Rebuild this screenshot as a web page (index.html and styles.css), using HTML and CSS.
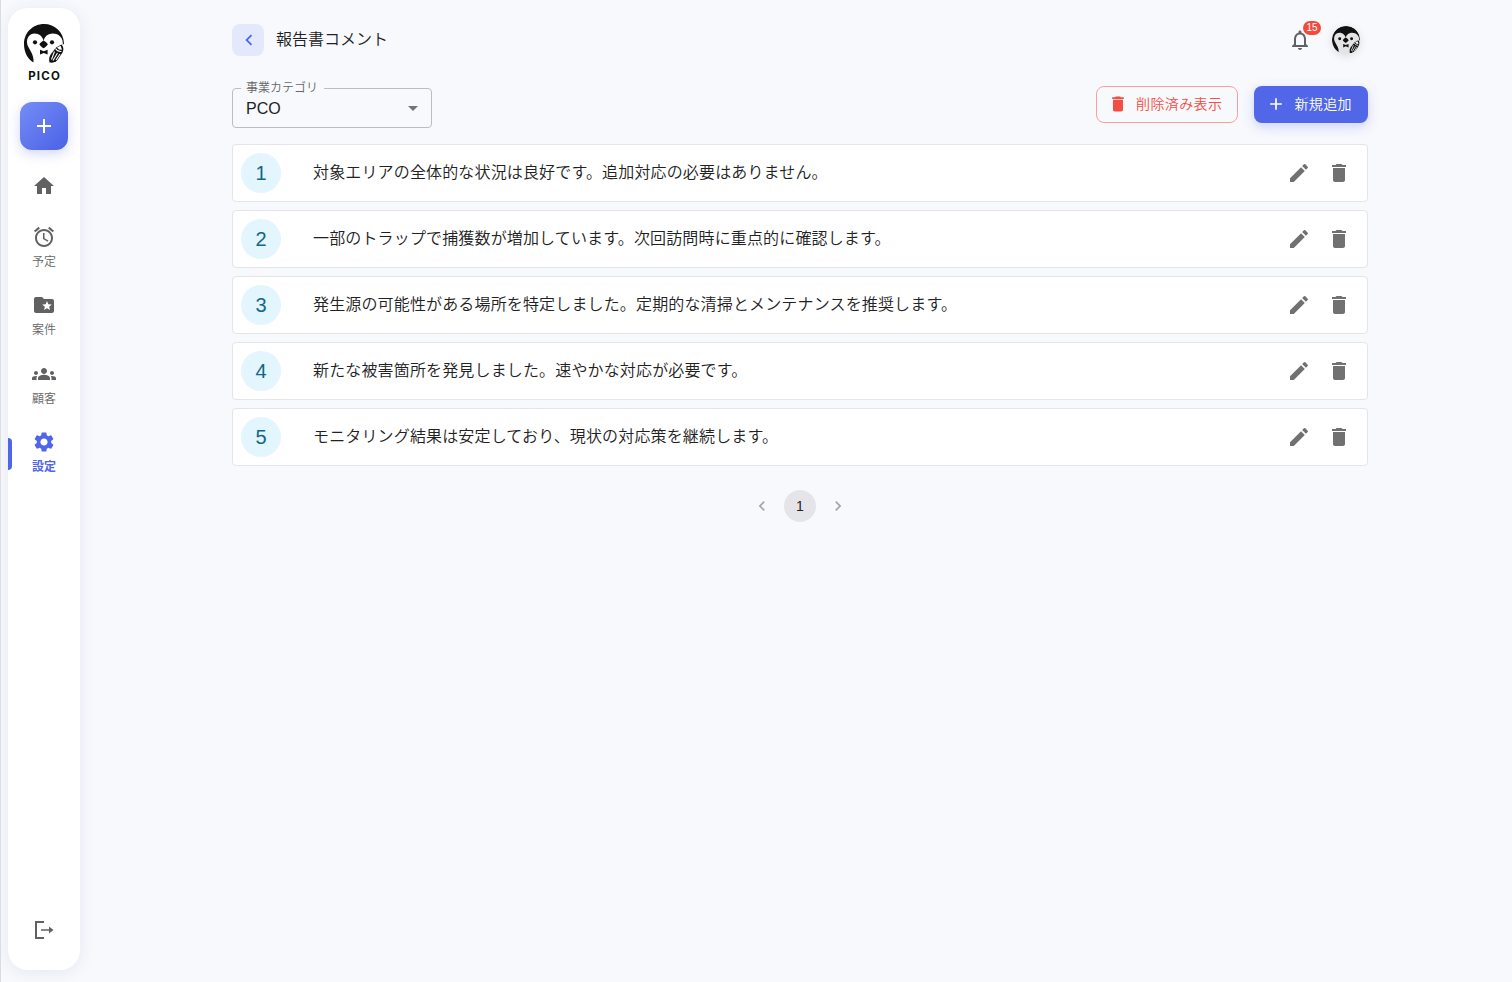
FILE: index.html
```html
<!DOCTYPE html>
<html lang="ja">
<head>
    <meta charset="UTF-8">
    <title>報告書コメント</title>
    <link rel="stylesheet" href="styles.css">
</head>
<body>
    <!-- shared icons -->
    <svg class="sprite" aria-hidden="true">
        <symbol id="penguin" viewBox="0 0 40 40">
            <path fill="#111" d="M9.500 38.500C3.500 35 0 28 0 20 0 8.500 9 0 20 0s19.500 8 20 19.500l-1.200 1.500C39.500 14 35 9.500 28.800 9.500c-4.800 0-8.400 3-9.200 7.500-.8-4.500-4.400-7.500-9-7.500C5.500 9.500 2.200 14 3.200 20c.8 4.500 7.300 10 6.300 18.500z"/>
            <circle cx="11" cy="18.300" r="2.100" fill="#111"/>
            <circle cx="28" cy="18.300" r="2.100" fill="#111"/>
            <path fill="#111" d="M19.600 16.500c1.500.7 3 2 4.300 3.700-1.200 1.700-2.500 3-4.300 4.100-1.800-1.100-3.100-2.400-4.300-4.100 1.300-1.700 2.800-3 4.300-3.700zM16 25.800l3.800 1.500 3.800-1.500v4.800l-3.800-1.500-3.800 1.500z"/>
            <path fill="#111" d="M37.500 20.500c2 2 2.500 5 1 8l-5 7.500c-2 2.200-5 3-8 2.500-.8-3-.3-6 1.500-8.500l5-6.500z"/>
            <path fill="none" stroke="#fff" stroke-width="1.100" d="M31.500 24.500c1 1.800 3.500 3.200 6 3M30.500 27.500l-3 8M33.500 29l-4.500 7.500M36 30l-4 6"/>
            <path fill="#fff" d="M33 23.500l3.500-1.800 1.500 4-3-.2z"/>
        </symbol>
        <symbol id="edit" viewBox="0 0 24 24">
            <path d="M3 17.250V21h3.750L17.810 9.940l-3.750-3.750L3 17.250zM20.710 7.040c.39-.39.39-1.020 0-1.410l-2.340-2.340a.9959.9959 0 0 0-1.410 0l-1.830 1.830 3.750 3.750 1.830-1.830z"/>
        </symbol>
        <symbol id="delete" viewBox="0 0 24 24">
            <path d="M6 19c0 1.100.9 2 2 2h8c1.100 0 2-.9 2-2V7H6v12zM19 4h-3.500l-1-1h-5l-1 1H5v2h14V4z"/>
        </symbol>
        <symbol id="add" viewBox="0 0 24 24">
            <path d="M19 13h-6v6h-2v-6H5v-2h6V5h2v6h6v2z"/>
        </symbol>
        <symbol id="prev" viewBox="0 0 24 24">
            <path d="M15.410 7.410 14 6l-6 6 6 6 1.410-1.410L10.830 12z"/>
        </symbol>
        <symbol id="next" viewBox="0 0 24 24">
            <path d="M10 6 8.590 7.410 13.170 12l-4.580 4.590L10 18l6-6z"/>
        </symbol>
    </svg>

    <aside class="sidebar">
        <svg class="logo"><use href="#penguin"/></svg>
        <div class="brand">PICO</div>
        <button class="create"><svg class="icon"><use href="#add"/></svg></button>
        <nav>
            <a class="nav-item home">
                <svg class="icon" viewBox="0 0 24 24"><path d="M10 20v-6h4v6h5v-8h3L12 3 2 12h3v8z"/></svg>
            </a>
            <a class="nav-item">
                <svg class="icon" viewBox="0 0 24 24"><path d="M22 5.720l-4.600-3.860-1.290 1.530 4.600 3.860L22 5.720zM7.880 3.390L6.600 1.860 2 5.710l1.290 1.530 4.590-3.850zM12.500 8H11v6l4.750 2.850.75-1.230-4-2.370V8zM12 4c-4.970 0-9 4.030-9 9s4.020 9 9 9c4.970 0 9-4.030 9-9s-4.030-9-9-9zm0 16c-3.870 0-7-3.130-7-7s3.130-7 7-7 7 3.130 7 7-3.130 7-7 7z"/></svg>
                <span>予定</span>
            </a>
            <a class="nav-item">
                <svg class="icon" viewBox="0 0 24 24"><path d="M20 6h-8l-2-2H4c-1.100 0-2 .9-2 2v12c0 1.100.9 2 2 2h16c1.100 0 2-.9 2-2V8c0-1.100-.9-2-2-2zm-2.060 11L15 15.280 12.060 17l.78-3.330-2.590-2.240 3.410-.29L15 8l1.340 3.140 3.410.29-2.590 2.240.78 3.330z"/></svg>
                <span>案件</span>
            </a>
            <a class="nav-item">
                <svg class="icon" viewBox="0 0 24 24"><path d="M12 12.750c1.630 0 3.070.39 4.240.9 1.080.48 1.760 1.560 1.760 2.730V18H6v-1.610c0-1.180.68-2.260 1.760-2.730 1.170-.52 2.610-.91 4.240-.91zM4 13c1.100 0 2-.9 2-2s-.9-2-2-2-2 .9-2 2 .9 2 2 2zm1.130 1.100c-.37-.06-.74-.1-1.130-.1-.99 0-1.930.21-2.780.58C.48 14.900 0 15.620 0 16.430V18h4.500v-1.610c0-.83.23-1.610.63-2.290zM20 13c1.100 0 2-.9 2-2s-.9-2-2-2-2 .9-2 2 .9 2 2 2zm4 3.430c0-.81-.48-1.530-1.220-1.850-.85-.37-1.790-.58-2.780-.58-.39 0-.76.04-1.130.1.4.68.63 1.460.63 2.290V18H24v-1.570zM12 6c1.660 0 3 1.340 3 3s-1.340 3-3 3-3-1.340-3-3 1.340-3 3-3z"/></svg>
                <span>顧客</span>
            </a>
            <a class="nav-item active">
                <svg class="icon" viewBox="0 0 24 24"><path d="M19.140 12.940c.04-.3.06-.61.06-.94 0-.32-.02-.64-.07-.94l2.030-1.580c.18-.14.23-.41.12-.61l-1.920-3.320c-.12-.22-.37-.29-.59-.22l-2.390.96c-.5-.38-1.030-.7-1.620-.94l-.36-2.540c-.04-.24-.24-.41-.48-.41h-3.840c-.24 0-.43.17-.47.41l-.36 2.540c-.59.24-1.130.57-1.620.94l-2.390-.96c-.22-.08-.47 0-.59.22L2.740 8.870c-.12.21-.08.47.12.61l2.030 1.580c-.05.3-.09.63-.09.94s.02.64.07.94l-2.030 1.580c-.18.14-.23.41-.12.61l1.920 3.320c.12.22.37.29.59.22l2.390-.96c.5.38 1.030.7 1.620.94l.36 2.540c.05.24.24.41.48.41h3.840c.24 0 .44-.17.47-.41l.36-2.540c.59-.24 1.130-.56 1.620-.94l2.390.96c.22.08.47 0 .59-.22l1.920-3.320c.12-.22.07-.47-.12-.61l-2.010-1.580zM12 15.600c-1.980 0-3.600-1.620-3.600-3.600s1.620-3.600 3.600-3.600 3.600 1.620 3.600 3.600-1.620 3.600-3.600 3.600z"/></svg>
                <span>設定</span>
            </a>
        </nav>
        <a class="logout">
            <svg class="icon" viewBox="0 0 24 24"><path d="M12 3H3v18h9v-2H5V5h7z"/><path d="M9 11.200h8V8.500l4.500 3.500-4.500 3.500v-2.700H9z"/></svg>
        </a>
    </aside>

    <main>
        <header>
            <button class="back"><svg class="icon"><use href="#prev"/></svg></button>
            <h1>報告書コメント</h1>
            <div class="bell">
                <svg class="icon" viewBox="0 0 24 24"><path d="M12 22c1.100 0 2-.9 2-2h-4c0 1.100.9 2 2 2zm6-6v-5c0-3.070-1.630-5.640-4.500-6.320V4c0-.83-.67-1.500-1.500-1.500s-1.500.67-1.500 1.500v.68C7.640 5.360 6 7.920 6 11v5l-2 2v1h16v-1l-2-2zm-2 1H8v-6c0-2.480 1.510-4.500 4-4.500s4 2.020 4 4.500v6z"/></svg>
                <span class="badge">15</span>
            </div>
            <div class="avatar"><svg><use href="#penguin"/></svg></div>
        </header>

        <div class="toolbar">
            <div class="select">
                <span class="select-label">事業カテゴリ</span>
                <span class="select-value">PCO</span>
                <svg class="icon" viewBox="0 0 24 24"><path d="M7 10l5 5 5-5z"/></svg>
            </div>
            <button class="btn btn-outline"><svg class="icon"><use href="#delete"/></svg><span>削除済み表示</span></button>
            <button class="btn btn-primary"><svg class="icon"><use href="#add"/></svg><span>新規追加</span></button>
        </div>

        <ul class="comments">
            <li>
                <span class="number">1</span>
                <p>対象エリアの全体的な状況は良好です。追加対応の必要はありません。</p>
                <button class="icon-btn"><svg class="icon"><use href="#edit"/></svg></button>
                <button class="icon-btn"><svg class="icon"><use href="#delete"/></svg></button>
            </li>
            <li>
                <span class="number">2</span>
                <p>一部のトラップで捕獲数が増加しています。次回訪問時に重点的に確認します。</p>
                <button class="icon-btn"><svg class="icon"><use href="#edit"/></svg></button>
                <button class="icon-btn"><svg class="icon"><use href="#delete"/></svg></button>
            </li>
            <li>
                <span class="number">3</span>
                <p>発生源の可能性がある場所を特定しました。定期的な清掃とメンテナンスを推奨します。</p>
                <button class="icon-btn"><svg class="icon"><use href="#edit"/></svg></button>
                <button class="icon-btn"><svg class="icon"><use href="#delete"/></svg></button>
            </li>
            <li>
                <span class="number">4</span>
                <p>新たな被害箇所を発見しました。速やかな対応が必要です。</p>
                <button class="icon-btn"><svg class="icon"><use href="#edit"/></svg></button>
                <button class="icon-btn"><svg class="icon"><use href="#delete"/></svg></button>
            </li>
            <li>
                <span class="number">5</span>
                <p>モニタリング結果は安定しており、現状の対応策を継続します。</p>
                <button class="icon-btn"><svg class="icon"><use href="#edit"/></svg></button>
                <button class="icon-btn"><svg class="icon"><use href="#delete"/></svg></button>
            </li>
        </ul>

        <div class="pagination">
            <button class="page arrow"><svg class="icon"><use href="#prev"/></svg></button>
            <button class="page current">1</button>
            <button class="page arrow"><svg class="icon"><use href="#next"/></svg></button>
        </div>
    </main>
</body>
</html>
```

FILE: styles.css
```css
* {
    box-sizing: border-box;
}

body {
    margin: 0;
    height: 982px;
    display: flex;
    background-color: #f8f9fd;
    border-left: 1px solid #dcdce0;
    font-family: "Liberation Sans", "Noto Sans CJK JP", sans-serif;
    font-weight: 350;
    color: #212121;
    overflow: hidden;
}

button {
    border: none;
    padding: 0;
    background: none;
    font-family: inherit;
    font-weight: inherit;
    color: inherit;
    cursor: pointer;
}

.sprite {
    display: none;
}

.icon {
    display: block;
    flex: none;
    width: 24px;
    height: 24px;
    fill: currentColor;
}

/* sidebar */
.sidebar {
    flex: none;
    width: 72px;
    height: 962px;
    margin: 8px 0 0 7px;
    padding-top: 16px;
    display: flex;
    flex-direction: column;
    align-items: center;
    background-color: #fff;
    border-radius: 20px;
    box-shadow: 0 2px 16px rgba(60, 60, 100, 0.09);
    color: #616161;
}

.logo {
    width: 40px;
    height: 40px;
}

.brand {
    margin-top: 4px;
    height: 16px;
    line-height: 16px;
    font-family: Inter, sans-serif;
    font-size: 11.5px;
    font-weight: 700;
    letter-spacing: 1.2px;
    margin-right: -1.2px;
    color: #111;
}

.create {
    width: 48px;
    height: 48px;
    margin-top: 18px;
    display: flex;
    align-items: center;
    justify-content: center;
    border-radius: 12px;
    background: linear-gradient(135deg, #748df5, #4b61e6);
    box-shadow: 0 4px 12px rgba(80, 100, 230, 0.25);
    color: #fff;
}

nav {
    width: 100%;
    margin-top: 7px;
}

.nav-item {
    position: relative;
    height: 68.4px;
    display: flex;
    flex-direction: column;
    align-items: center;
    justify-content: center;
    font-size: 12px;
    color: #616161;
}

.nav-item span {
    height: 24px;
    line-height: 26px;
    color: #666;
}

.home {
    height: 57.8px;
}

.active,
.active span {
    color: #5065e8;
    font-weight: 700;
}

.active::before {
    content: "";
    position: absolute;
    left: 0;
    top: 18px;
    width: 4px;
    height: 32px;
    border-radius: 0 4px 4px 0;
    background-color: #5065e8;
}

.logout {
    margin-top: auto;
    margin-bottom: 28px;
}

/* content */
main {
    width: 1136px;
    margin: 24px 0 0 152px;
}

header {
    display: flex;
    align-items: center;
    height: 32px;
}

.back {
    width: 32px;
    height: 32px;
    display: flex;
    align-items: center;
    justify-content: center;
    border-radius: 8px;
    background-color: #e4e8fb;
    color: #5065e8;
}

.back .icon {
    width: 22px;
    height: 22px;
    margin-left: 2px;
}

h1 {
    margin: 0 0 0 12px;
    font-size: 16px;
    line-height: 32px;
    font-weight: 350;
}

.bell {
    position: relative;
    margin-left: auto;
    color: #616161;
}

.badge {
    position: absolute;
    left: 15px;
    top: -7px;
    width: 18px;
    height: 14px;
    border-radius: 7px;
    background-color: #f44a3e;
    color: #fff;
    font-size: 10px;
    line-height: 14px;
    text-align: center;
}

.avatar {
    width: 28px;
    height: 28px;
    margin: 0 8px 0 20px;
    border-radius: 50%;
    background-color: #e4e4e4;
    box-shadow: 0 2px 8px rgba(0, 0, 0, 0.12);
    overflow: hidden;
}

.avatar svg {
    display: block;
    width: 28px;
    height: 28px;
}

.toolbar {
    display: flex;
    margin-top: 30px;
    height: 42px;
}

.select {
    position: relative;
    width: 200px;
    height: 40px;
    margin: 2px auto 0 0;
    padding: 0 6px 0 13px;
    display: flex;
    align-items: center;
    justify-content: space-between;
    border: 1px solid #bcbdc2;
    border-radius: 4px;
}

.select-label {
    position: absolute;
    left: 8px;
    top: -10px;
    padding: 0 6px 0 5px;
    background-color: #f8f9fd;
    font-size: 12px;
    line-height: 18px;
    color: #666;
}

.select-value {
    padding-top: 2px;
}

.select .icon {
    color: #757575;
}

.btn {
    height: 36.5px;
    display: flex;
    align-items: center;
    gap: 8px;
    border-radius: 8px;
    font-size: 14px;
    letter-spacing: 0.4px;
}

.btn span {
    padding-bottom: 2px;
}

.btn .icon {
    width: 20px;
    height: 20px;
}

.btn-outline {
    padding: 0 15px 0 11px;
    border: 1px solid #f7a19f;
    color: #f44d42;
}

.btn-primary {
    margin-left: 16px;
    padding: 0 16px 0 12px;
    background-color: #5167e8;
    box-shadow: 0 4px 12px rgba(80, 100, 230, 0.25);
    color: #fff;
}

.comments {
    list-style: none;
    margin: 16px 0 0;
    padding: 0;
    display: flex;
    flex-direction: column;
    gap: 8px;
}

.comments li {
    height: 58px;
    padding: 0 8px;
    display: flex;
    align-items: center;
    background-color: #fff;
    border: 1px solid #e4e5ea;
    border-radius: 4px;
}

.number {
    width: 40px;
    height: 40px;
    border-radius: 50%;
    background-color: #e3f5fd;
    color: #12668a;
    font-size: 20px;
    line-height: 40px;
    text-align: center;
}

.comments p {
    flex: 1;
    margin: 0 0 0 32px;
    font-size: 16px;
    line-height: 24px;
    letter-spacing: 0.15px;
}

.icon-btn {
    width: 40px;
    height: 40px;
    display: flex;
    align-items: center;
    justify-content: center;
    color: #717171;
}

.pagination {
    display: flex;
    justify-content: center;
    gap: 6px;
    margin-top: 24px;
}

.page {
    width: 32px;
    height: 32px;
    display: flex;
    align-items: center;
    justify-content: center;
    border-radius: 50%;
    font-size: 14px;
}

.page .icon {
    width: 20px;
    height: 20px;
}

.current {
    background-color: #e5e5e9;
}

.arrow {
    color: #a4a5a8;
}
```
